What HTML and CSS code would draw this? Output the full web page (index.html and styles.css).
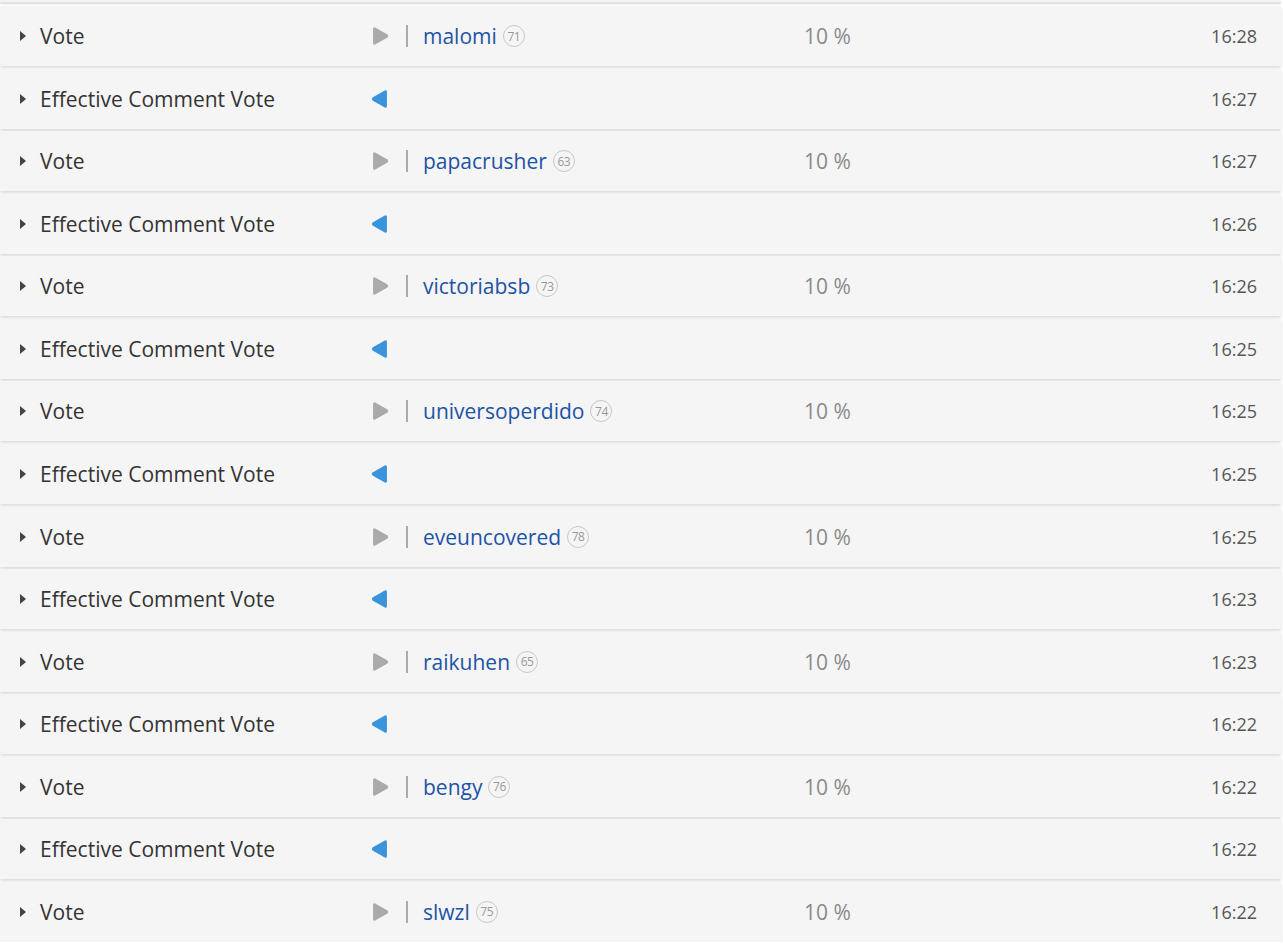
FILE: index.html
```html
<!DOCTYPE html>
<html>
<head>
<meta charset="utf-8">
<link rel="stylesheet" href="styles.css">
</head>
<body>
<div class="list">
  <div class="row"><div class="type"><span class="caret"></span>Vote</div><div class="dir"><svg class="tri out" viewBox="0 0 16 18"><path d="M3 1 L14.6 7.6 Q16 9 14.6 10.4 L3 17 Q1 18 1 15.6 V2.4 Q1 0 3 1 Z"/></svg></div><div class="user"><span class="sep"></span><a class="name">malomi</a><span class="rep">71</span></div><div class="pct">10 %</div><div class="time">16:28</div></div>
  <div class="row"><div class="type"><span class="caret"></span>Effective Comment Vote</div><div class="dir"><svg class="tri in" viewBox="0 0 16 18"><path d="M13 1 L1.4 7.6 Q0 9 1.4 10.4 L13 17 Q15 18 15 15.6 V2.4 Q15 0 13 1 Z"/></svg></div><div class="user"></div><div class="pct"></div><div class="time">16:27</div></div>
  <div class="row"><div class="type"><span class="caret"></span>Vote</div><div class="dir"><svg class="tri out" viewBox="0 0 16 18"><path d="M3 1 L14.6 7.6 Q16 9 14.6 10.4 L3 17 Q1 18 1 15.6 V2.4 Q1 0 3 1 Z"/></svg></div><div class="user"><span class="sep"></span><a class="name">papacrusher</a><span class="rep">63</span></div><div class="pct">10 %</div><div class="time">16:27</div></div>
  <div class="row"><div class="type"><span class="caret"></span>Effective Comment Vote</div><div class="dir"><svg class="tri in" viewBox="0 0 16 18"><path d="M13 1 L1.4 7.6 Q0 9 1.4 10.4 L13 17 Q15 18 15 15.6 V2.4 Q15 0 13 1 Z"/></svg></div><div class="user"></div><div class="pct"></div><div class="time">16:26</div></div>
  <div class="row"><div class="type"><span class="caret"></span>Vote</div><div class="dir"><svg class="tri out" viewBox="0 0 16 18"><path d="M3 1 L14.6 7.6 Q16 9 14.6 10.4 L3 17 Q1 18 1 15.6 V2.4 Q1 0 3 1 Z"/></svg></div><div class="user"><span class="sep"></span><a class="name">victoriabsb</a><span class="rep">73</span></div><div class="pct">10 %</div><div class="time">16:26</div></div>
  <div class="row"><div class="type"><span class="caret"></span>Effective Comment Vote</div><div class="dir"><svg class="tri in" viewBox="0 0 16 18"><path d="M13 1 L1.4 7.6 Q0 9 1.4 10.4 L13 17 Q15 18 15 15.6 V2.4 Q15 0 13 1 Z"/></svg></div><div class="user"></div><div class="pct"></div><div class="time">16:25</div></div>
  <div class="row"><div class="type"><span class="caret"></span>Vote</div><div class="dir"><svg class="tri out" viewBox="0 0 16 18"><path d="M3 1 L14.6 7.6 Q16 9 14.6 10.4 L3 17 Q1 18 1 15.6 V2.4 Q1 0 3 1 Z"/></svg></div><div class="user"><span class="sep"></span><a class="name">universoperdido</a><span class="rep">74</span></div><div class="pct">10 %</div><div class="time">16:25</div></div>
  <div class="row"><div class="type"><span class="caret"></span>Effective Comment Vote</div><div class="dir"><svg class="tri in" viewBox="0 0 16 18"><path d="M13 1 L1.4 7.6 Q0 9 1.4 10.4 L13 17 Q15 18 15 15.6 V2.4 Q15 0 13 1 Z"/></svg></div><div class="user"></div><div class="pct"></div><div class="time">16:25</div></div>
  <div class="row"><div class="type"><span class="caret"></span>Vote</div><div class="dir"><svg class="tri out" viewBox="0 0 16 18"><path d="M3 1 L14.6 7.6 Q16 9 14.6 10.4 L3 17 Q1 18 1 15.6 V2.4 Q1 0 3 1 Z"/></svg></div><div class="user"><span class="sep"></span><a class="name">eveuncovered</a><span class="rep">78</span></div><div class="pct">10 %</div><div class="time">16:25</div></div>
  <div class="row"><div class="type"><span class="caret"></span>Effective Comment Vote</div><div class="dir"><svg class="tri in" viewBox="0 0 16 18"><path d="M13 1 L1.4 7.6 Q0 9 1.4 10.4 L13 17 Q15 18 15 15.6 V2.4 Q15 0 13 1 Z"/></svg></div><div class="user"></div><div class="pct"></div><div class="time">16:23</div></div>
  <div class="row"><div class="type"><span class="caret"></span>Vote</div><div class="dir"><svg class="tri out" viewBox="0 0 16 18"><path d="M3 1 L14.6 7.6 Q16 9 14.6 10.4 L3 17 Q1 18 1 15.6 V2.4 Q1 0 3 1 Z"/></svg></div><div class="user"><span class="sep"></span><a class="name">raikuhen</a><span class="rep">65</span></div><div class="pct">10 %</div><div class="time">16:23</div></div>
  <div class="row"><div class="type"><span class="caret"></span>Effective Comment Vote</div><div class="dir"><svg class="tri in" viewBox="0 0 16 18"><path d="M13 1 L1.4 7.6 Q0 9 1.4 10.4 L13 17 Q15 18 15 15.6 V2.4 Q15 0 13 1 Z"/></svg></div><div class="user"></div><div class="pct"></div><div class="time">16:22</div></div>
  <div class="row"><div class="type"><span class="caret"></span>Vote</div><div class="dir"><svg class="tri out" viewBox="0 0 16 18"><path d="M3 1 L14.6 7.6 Q16 9 14.6 10.4 L3 17 Q1 18 1 15.6 V2.4 Q1 0 3 1 Z"/></svg></div><div class="user"><span class="sep"></span><a class="name">bengy</a><span class="rep">76</span></div><div class="pct">10 %</div><div class="time">16:22</div></div>
  <div class="row"><div class="type"><span class="caret"></span>Effective Comment Vote</div><div class="dir"><svg class="tri in" viewBox="0 0 16 18"><path d="M13 1 L1.4 7.6 Q0 9 1.4 10.4 L13 17 Q15 18 15 15.6 V2.4 Q15 0 13 1 Z"/></svg></div><div class="user"></div><div class="pct"></div><div class="time">16:22</div></div>
  <div class="row"><div class="type"><span class="caret"></span>Vote</div><div class="dir"><svg class="tri out" viewBox="0 0 16 18"><path d="M3 1 L14.6 7.6 Q16 9 14.6 10.4 L3 17 Q1 18 1 15.6 V2.4 Q1 0 3 1 Z"/></svg></div><div class="user"><span class="sep"></span><a class="name">slwzl</a><span class="rep">75</span></div><div class="pct">10 %</div><div class="time">16:22</div></div>
</div>
</body>
</html>
```
FILE: styles.css
```css
html, body {
  margin: 0;
  padding: 0;
  background: #ffffff;
}
body {
  font-family: "Open Sans", "Liberation Sans", sans-serif;
  overflow: hidden;
}
.list {
  display: flex;
  flex-direction: column;
  gap: 2.57px;
  width: 1281px;
}
.list::before {
  content: "";
  display: block;
  height: 2px;
  margin-bottom: 1.5px;
  background: #f3f3f3;
  box-shadow: 0 2px 2px rgba(0, 0, 0, 0.18);
}
.row {
  height: 60px;
  background: #f5f5f5;
  box-shadow: 0 2px 3px rgba(0, 0, 0, 0.15);
  display: grid;
  grid-template-columns: 371px 33px 400px 1fr auto;
  align-items: center;
  font-size: 21px;
}
.type {
  display: flex;
  align-items: center;
  padding-left: 20px;
  color: #333333;
}
.caret {
  width: 0;
  height: 0;
  border-top: 5px solid transparent;
  border-bottom: 5px solid transparent;
  border-left: 6px solid #444;
  margin-right: 14px;
}
.dir {
  display: flex;
  align-items: center;
}
.tri {
  width: 17px;
  height: 20px;
  display: block;
}
.tri.out { fill: #aaaaaa; margin-left: 1px; }
.tri.in { fill: #3a94dc; margin-left: 0; }
.user {
  display: flex;
  align-items: center;
}
.sep {
  width: 2px;
  height: 22px;
  background: #aaaaaa;
  margin-left: 2px;
  margin-right: 15px;
}
.name {
  color: #1d53a6;
  text-decoration: none;
}
.rep {
  margin-left: 6px;
  width: 20px;
  height: 20px;
  border: 1px solid #c8c8c8;
  border-radius: 50%;
  font-size: 12px;
  color: #999;
  display: flex;
  align-items: center;
  justify-content: center;
  letter-spacing: -0.5px;
}
.pct {
  color: #8a8a8a;
}
.time {
  color: #555;
  font-size: 18px;
  padding-right: 24px;
  text-align: right;
}
```
